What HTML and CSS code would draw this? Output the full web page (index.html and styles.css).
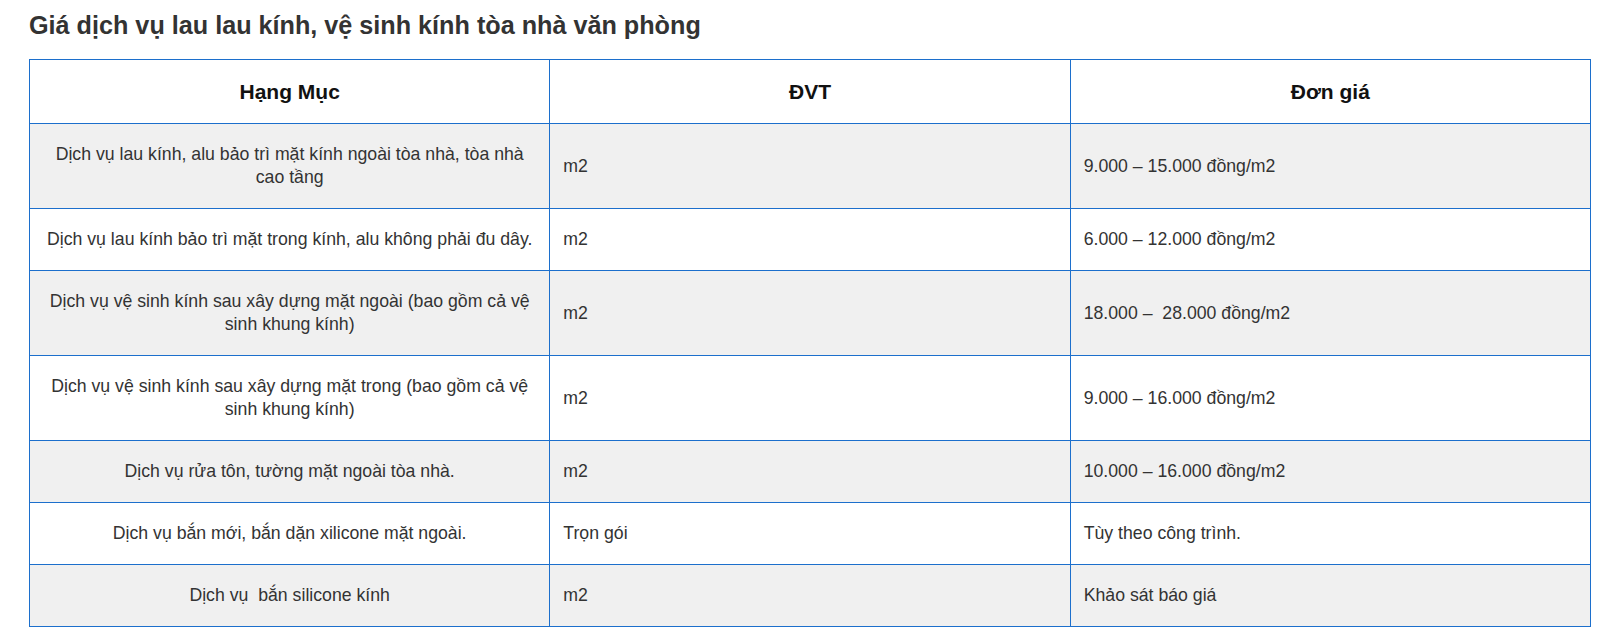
FILE: index.html
```html
<!DOCTYPE html>
<html lang="vi">
<head>
<meta charset="utf-8">
<link rel="stylesheet" href="styles.css">
</head>
<body>
<div class="page">
  <h2 class="title">Giá dịch vụ lau lau kính, vệ sinh kính tòa nhà văn phòng</h2>
  <table class="price">
    <colgroup><col class="c"><col class="c"><col class="c"></colgroup>
    <thead>
      <tr><th>Hạng Mục</th><th>ĐVT</th><th>Đơn giá</th></tr>
    </thead>
    <tbody>
      <tr><td class="name">Dịch vụ lau kính, alu bảo trì mặt kính ngoài tòa nhà, tòa nhà cao tầng</td><td>m2</td><td>9.000 – 15.000 đồng/m2</td></tr>
      <tr><td class="name">Dịch vụ lau kính bảo trì mặt trong kính, alu không phải đu dây.</td><td>m2</td><td>6.000 – 12.000 đồng/m2</td></tr>
      <tr><td class="name">Dịch vụ vệ sinh kính sau xây dựng mặt ngoài (bao gồm cả vệ sinh khung kính)</td><td>m2</td><td>18.000 –&nbsp; 28.000 đồng/m2</td></tr>
      <tr><td class="name">Dịch vụ vệ sinh kính sau xây dựng mặt trong (bao gồm cả vệ sinh khung kính)</td><td>m2</td><td>9.000 – 16.000 đồng/m2</td></tr>
      <tr><td class="name">Dịch vụ rửa tôn, tường mặt ngoài tòa nhà.</td><td>m2</td><td>10.000 – 16.000 đồng/m2</td></tr>
      <tr><td class="name">Dịch vụ bắn mới, bắn dặn xilicone mặt ngoài.</td><td>Trọn gói</td><td>Tùy theo công trình.</td></tr>
      <tr><td class="name">Dịch vụ&nbsp; bắn silicone kính</td><td>m2</td><td>Khảo sát báo giá</td></tr>
    </tbody>
  </table>
</div>
</body>
</html>
```

FILE: styles.css
```css
html, body {
  margin: 0;
  padding: 0;
  background: #ffffff;
}
.page {
  padding: 9px 0 0 29px;
  font-family: "Liberation Sans", Arial, sans-serif;
  color: #333333;
}
.title {
  margin: 0 0 18px 0;
  font-size: 25.2px;
  line-height: 32px;
  font-weight: bold;
  color: #333333;
}
.price {
  width: 1562px;
  border-collapse: collapse;
  table-layout: fixed;
  font-size: 17.7px;
  line-height: 23px;
}
.price th, .price td {
  border: 1px solid #1c6fcc;
  padding: 19px 12px;
  text-align: left;
  vertical-align: middle;
}
.price td {
  padding-left: 13px;
}
.price th {
  text-align: center;
  font-size: 21px;
  font-weight: bold;
  color: #111111;
  padding: 20px 12px;
  background: #ffffff;
}
.price td.name {
  text-align: center;
  padding-left: 10px;
  padding-right: 10px;
}
.price tbody tr:nth-child(odd) td {
  background: #f0f0f0;
}
.price tbody tr:nth-child(even) td {
  background: #ffffff;
}
```
